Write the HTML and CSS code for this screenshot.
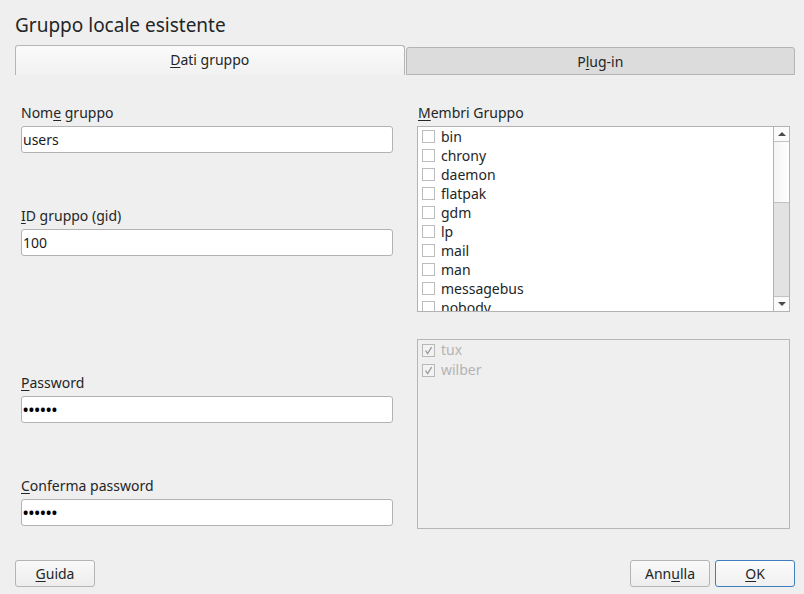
FILE: index.html
```html
<!DOCTYPE html>
<html lang="it">
<head>
<meta charset="utf-8">
<title>Gruppo locale esistente</title>
<link rel="stylesheet" href="styles.css">
</head>
<body>
<div class="page">
  <div class="title">Gruppo locale esistente</div>
  <div class="tabs">
    <div class="tab active"><span><u>D</u>ati gruppo</span></div>
    <div class="tab inactive"><span>P<u>l</u>ug-in</span></div>
  </div>
  <div class="content">
    <div class="left">
      <div class="field f1">
        <div class="label">Nom<u>e</u> gruppo</div>
        <div class="input">users</div>
      </div>
      <div class="field f2">
        <div class="label"><u>I</u>D gruppo (gid)</div>
        <div class="input">100</div>
      </div>
      <div class="field f3">
        <div class="label"><u>P</u>assword</div>
        <div class="input dots">••••••</div>
      </div>
      <div class="field f4">
        <div class="label"><u>C</u>onferma password</div>
        <div class="input dots">••••••</div>
      </div>
    </div>
    <div class="right">
      <div class="label"><u>M</u>embri Gruppo</div>
      <div class="listbox">
        <div class="items">
          <div class="row"><span class="cb"></span>bin</div>
          <div class="row"><span class="cb"></span>chrony</div>
          <div class="row"><span class="cb"></span>daemon</div>
          <div class="row"><span class="cb"></span>flatpak</div>
          <div class="row"><span class="cb"></span>gdm</div>
          <div class="row"><span class="cb"></span>lp</div>
          <div class="row"><span class="cb"></span>mail</div>
          <div class="row"><span class="cb"></span>man</div>
          <div class="row"><span class="cb"></span>messagebus</div>
          <div class="row"><span class="cb"></span>nobody</div>
        </div>
        <div class="scrollbar">
          <div class="sb-btn"><span class="tri-up"></span></div>
          <div class="sb-slider"></div>
          <div class="sb-trough"></div>
          <div class="sb-btn down"><span class="tri-down"></span></div>
        </div>
      </div>
      <div class="disabled-box">
        <div class="drow"><span class="cb checked"><svg width="11" height="11" viewBox="0 0 11 11"><path d="M2.5 5.5 L4.6 8.6 L8.6 2.2" fill="none" stroke="#9a9a9a" stroke-width="1.3"/></svg></span>tux</div>
        <div class="drow"><span class="cb checked"><svg width="11" height="11" viewBox="0 0 11 11"><path d="M2.5 5.5 L4.6 8.6 L8.6 2.2" fill="none" stroke="#9a9a9a" stroke-width="1.3"/></svg></span>wilber</div>
      </div>
    </div>
  </div>
  <div class="footer">
    <button class="btn"><u>G</u>uida</button>
    <div class="spacer"></div>
    <button class="btn">Ann<u>u</u>lla</button>
    <button class="btn ok"><u>O</u>K</button>
  </div>
</div>
</body>
</html>
```
FILE: styles.css
```css
html, body {
  margin: 0;
  padding: 0;
}
body {
  width: 804px;
  height: 594px;
  background: #efefef;
  font-family: "Noto Sans", "DejaVu Sans", sans-serif;
  font-size: 14px;
  color: #232627;
  overflow: hidden;
}
u {
  text-decoration: underline;
  text-underline-offset: 2px;
  text-decoration-thickness: 1px;
}
.page {
  display: flex;
  flex-direction: column;
  height: 594px;
  box-sizing: border-box;
}
.title {
  font-size: 19px;
  line-height: 26px;
  padding: 12px 0 0 15px;
  height: 26px;
  color: #232627;
}
.tabs {
  display: flex;
  align-items: flex-end;
  margin: 7px 9px 0 15px;
  height: 30px;
}
.tab {
  flex: 1;
  box-sizing: border-box;
  display: flex;
  align-items: center;
  justify-content: center;
  border-radius: 3px 3px 0 0;
}
.tab.active {
  height: 30px;
  background: linear-gradient(#fbfbfb, #f1f1f1);
  border: 1px solid #b6b6b6;
  border-bottom: none;
  padding-bottom: 2px;
}
.tab.inactive {
  height: 28px;
  background: #dcdcdc;
  border: 1px solid #b4b4b4;
  margin-left: 1px;
}
.content {
  display: flex;
  padding-left: 21px;
}
.left {
  width: 372px;
  display: flex;
  flex-direction: column;
}
.label {
  line-height: 18px;
  height: 18px;
}
.field .input {
  margin-top: 4px;
}
.f1 { margin-top: 29px; }
.f2 { margin-top: 54px; }
.f3 { margin-top: 118px; }
.f4 { margin-top: 54px; }
.input {
  box-sizing: border-box;
  height: 27px;
  background: #fff;
  border: 1px solid #b3b3b3;
  border-radius: 3px;
  padding-left: 1px;
  line-height: 25px;
  color: #1a1a1a;
}
.input.dots {
  font-size: 14px;
  letter-spacing: 0.5px;
  font-weight: bold;
  color: #000;
}
.right {
  width: 373px;
  margin-left: 24px;
  display: flex;
  flex-direction: column;
}
.right > .label {
  margin-top: 29px;
  padding-left: 1px;
}
.listbox {
  margin-top: 4px;
  box-sizing: border-box;
  height: 186px;
  border: 1px solid #b3b3b3;
  background: #fff;
  display: flex;
  overflow: hidden;
}
.items {
  flex: 1;
  overflow: hidden;
}
.row {
  height: 19px;
  line-height: 19px;
  display: flex;
  align-items: center;
  padding-left: 4px;
  white-space: nowrap;
}
.cb {
  box-sizing: border-box;
  width: 13px;
  height: 13px;
  border: 1px solid #bcbcbc;
  background: #fff;
  margin-right: 6px;
  flex: none;
  display: flex;
  align-items: center;
  justify-content: center;
}
.scrollbar {
  width: 15px;
  border-left: 1px solid #b3b3b3;
  display: flex;
  flex-direction: column;
  background: #fff;
}
.sb-btn {
  height: 14px;
  display: flex;
  align-items: center;
  justify-content: center;
  background: #fafafa;
  border-bottom: 1px solid #c2c2c2;
  flex: none;
}
.sb-btn.down {
  border-bottom: none;
  border-top: 1px solid #c2c2c2;
}
.tri-up {
  width: 0;
  height: 0;
  border-left: 4px solid transparent;
  border-right: 4px solid transparent;
  border-bottom: 4px solid #4a4a4a;
}
.tri-down {
  width: 0;
  height: 0;
  border-left: 4px solid transparent;
  border-right: 4px solid transparent;
  border-top: 4px solid #4a4a4a;
}
.sb-slider {
  height: 60px;
  flex: none;
  background: linear-gradient(90deg, #f4f4f4, #ffffff);
  border-bottom: 1px solid #c2c2c2;
}
.sb-trough {
  flex: 1;
  background: #e2e2e2;
}
.disabled-box {
  margin-top: 27px;
  box-sizing: border-box;
  height: 190px;
  border: 1px solid #b6b6b6;
  background: #efefef;
  color: #b4b4b4;
}
.drow {
  height: 20px;
  line-height: 20px;
  display: flex;
  align-items: center;
  padding-left: 4px;
}
.cb.checked {
  background: #f2f2f2;
  border-color: #b8b8b8;
}
.footer {
  margin-top: auto;
  display: flex;
  padding: 0 9px 7px 15px;
}
.spacer {
  flex: 1;
}
.btn {
  box-sizing: border-box;
  width: 80px;
  height: 27px;
  border: 1px solid #b4b4b4;
  border-radius: 3px;
  background: linear-gradient(#f9f9f9, #ededed);
  font-family: "Noto Sans", "DejaVu Sans", sans-serif;
  font-size: 14px;
  color: #232627;
  padding: 0;
  margin: 0;
}
.btn.ok {
  margin-left: 5px;
  border-color: #3f7fbf;
  background: linear-gradient(#fbfbfb, #f0f0f0);
}
```
